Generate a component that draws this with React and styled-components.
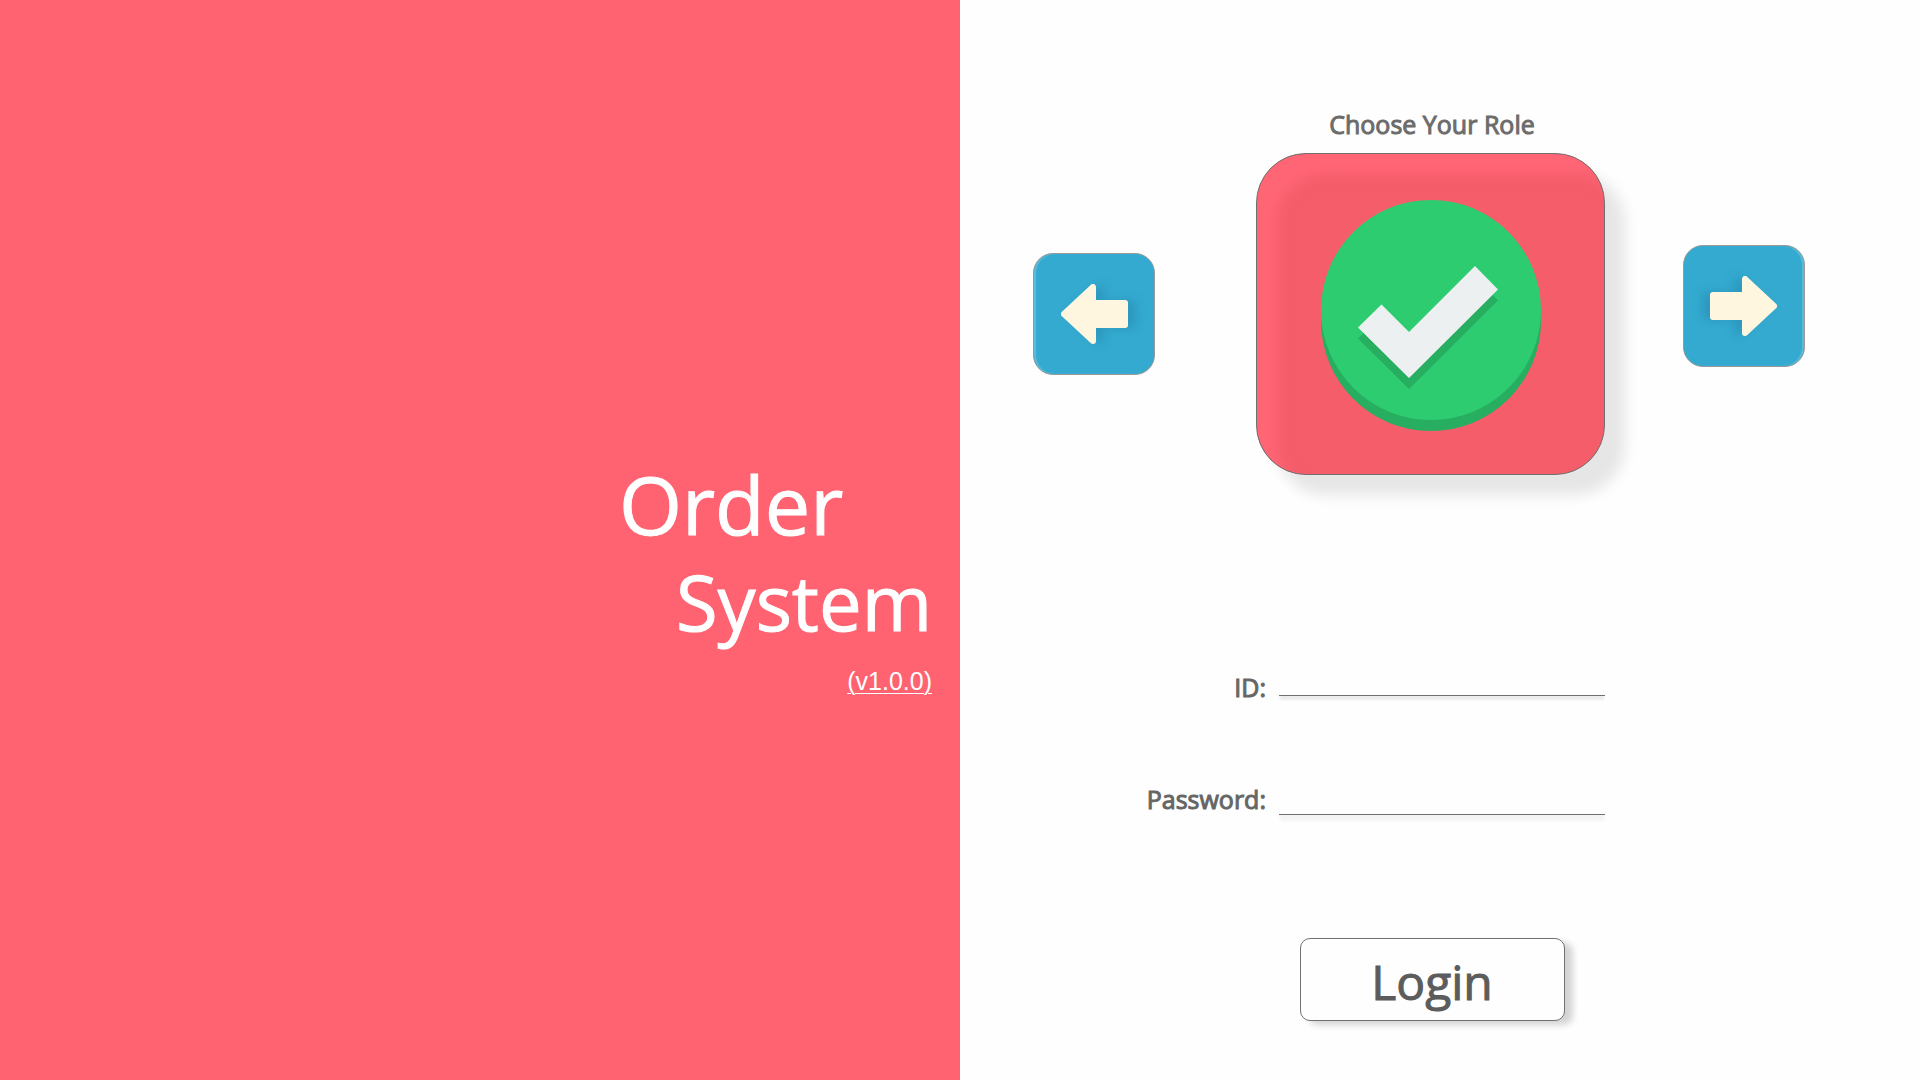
import React, { useState } from "react";
import styled, { createGlobalStyle } from "styled-components";

const GlobalStyle = createGlobalStyle`
  * { box-sizing: border-box; }
  body {
    margin: 0;
    background: #fefefe;
    color: #5c5c5c;
    font-family: "Open Sans", "Noto Sans", sans-serif;
  }
`;

const Page = styled.main`
  display: grid;
  grid-template-columns: 1fr 1fr;
  min-height: 100vh;
`;

const Brand = styled.section`
  display: flex;
  flex-direction: column;
  align-items: flex-end;
  justify-content: center;
  padding: 74px 28px 0 0;
  background: #ff6372;
  color: #fff;
`;

const Title = styled.h1`
  display: flex;
  flex-direction: column;
  width: 313px;
  margin: 0;
  font-weight: 400;
  font-size: 81px;
  line-height: 98px;
  -webkit-text-stroke: 1px currentColor;
`;

const TitleEnd = styled.span`
  align-self: flex-end;
  font-size: 76px;
`;

const Version = styled.a`
  margin-top: 12px;
  color: inherit;
  font-family: "Liberation Sans", Arial, sans-serif;
  font-size: 25px;
  line-height: 36px;
  text-decoration: underline;
  text-decoration-thickness: 1px;
  text-underline-offset: 3px;
`;

const Panel = styled.section`
  display: flex;
  flex-direction: column;
  padding-top: 106px;
`;

const Heading = styled.h2`
  margin: 0 0 11px;
  padding-right: 16px;
  font-weight: 400;
  font-size: 25px;
  line-height: 36px;
  text-align: center;
  color: #6c6c6c;
  -webkit-text-stroke: 1px currentColor;
`;

const RolePicker = styled.div`
  display: grid;
  grid-template-columns: 223fr 349px 200fr;
  align-items: center;
  padding: 0 115px 0 73px;
`;

const ArrowButton = styled.button`
  width: 122px;
  height: 122px;
  padding: 0;
  border: 1px solid #999;
  border-radius: 20px;
  background: #34aad0;
  box-shadow: inset ${(p) => (p.$next ? "-2px" : "2px")} 0 1px #5cbbd9;
  cursor: pointer;
`;

const NextSlot = styled.div`
  justify-self: end;
  padding-bottom: 12px;
`;

const ArrowDrawing = styled.svg`
  display: block;
  width: 120px;
  height: 120px;
  transform: ${(p) => (p.$next ? "scaleX(-1)" : "none")};
  filter: drop-shadow(8px 0 5px rgba(20, 100, 140, 0.25));
`;

const RoleCard = styled.div`
  display: flex;
  align-items: center;
  justify-content: center;
  height: 322px;
  padding-top: 2px;
  border: 1px solid #707070;
  border-radius: 50px;
  background: #f55d6b;
  box-shadow:
    inset 20px 20px 14px #ff6675,
    20px 20px 14px #e6e6e6;
`;

const Form = styled.form`
  display: flex;
  flex-direction: column;
`;

const Field = styled.div`
  display: flex;
  align-items: flex-end;
  justify-content: flex-end;
  gap: 13px;
  padding-right: 315px;
  margin-top: ${(p) => p.$space};
`;

const Label = styled.label`
  font-weight: 400;
  font-size: 25px;
  line-height: 32px;
  text-align: right;
  color: #666;
  -webkit-text-stroke: 1px currentColor;
`;

const Input = styled.input`
  width: 326px;
  height: 40px;
  margin: 0 0 ${(p) => p.$raise || "0"};
  padding: 0 4px;
  border: 0;
  border-bottom: 1px solid #707070;
  border-radius: 0;
  outline: none;
  background: transparent;
  box-shadow: ${(p) => p.$shadow};
  color: inherit;
  font: inherit;
  font-size: 24px;
`;

const LoginRow = styled.div`
  display: flex;
  justify-content: center;
  padding: 123px 16px 0 0;
`;

const LoginButton = styled.button`
  width: 265px;
  height: 83px;
  padding: 4px 0 0;
  border: 1px solid #707070;
  border-radius: 10px;
  background: #fefefe;
  box-shadow: 8px 4px 6px #d4d4d4;
  color: #5c5c5c;
  font-family: inherit;
  font-size: 48px;
  line-height: 60px;
  -webkit-text-stroke: 1px currentColor;
  cursor: pointer;
`;

function Arrow({ next }) {
  return (
    <ArrowDrawing $next={next} viewBox="1 1 120 120" aria-hidden="true">
      <path
        d="M31 61 60 34V50H92V72H60V88Z"
        fill="#fff6e0"
        stroke="#fff6e0"
        strokeWidth="6"
        strokeLinejoin="round"
      />
    </ArrowDrawing>
  );
}

function CheckBadge() {
  const tick = "M37 127.500 60.500 104.500 88 132 154 66 177 89.500 88 178Z";
  return (
    <svg width="220" height="231" viewBox="0 0 220 231" role="img" aria-label="Selected">
      <circle cx="110" cy="121" r="110" fill="#27ae60" />
      <circle cx="110" cy="110" r="110" fill="#2ecc71" />
      <path d={tick} transform="translate(0 11)" fill="#27ae60" />
      <path d={tick} fill="#ecf0f1" />
    </svg>
  );
}

export default function App() {
  const [id, setId] = useState("");
  const [password, setPassword] = useState("");

  return (
    <>
      <GlobalStyle />
      <Page>
        <Brand>
          <Title>
            <span>Order</span>
            <TitleEnd>System</TitleEnd>
          </Title>
          <Version href="#version">(v1.0.0)</Version>
        </Brand>
        <Panel>
          <Heading>Choose Your Role</Heading>
          <RolePicker>
            <ArrowButton type="button" aria-label="Previous role">
              <Arrow />
            </ArrowButton>
            <RoleCard>
              <CheckBadge />
            </RoleCard>
            <NextSlot>
              <ArrowButton $next type="button" aria-label="Next role">
                <Arrow next />
              </ArrowButton>
            </NextSlot>
          </RolePicker>
          <Form onSubmit={(e) => e.preventDefault()}>
            <Field $space="181px">
              <Label htmlFor="user-id">ID:</Label>
              <Input
                id="user-id"
                $raise="7px"
                $shadow="0 5px 2px -1px #ececec"
                value={id}
                onChange={(e) => setId(e.target.value)}
              />
            </Field>
            <Field $space="72px">
              <Label htmlFor="user-password">Password:</Label>
              <Input
                id="user-password"
                type="password"
                $shadow="0 7px 3px -1px #f4f4f4"
                value={password}
                onChange={(e) => setPassword(e.target.value)}
              />
            </Field>
            <LoginRow>
              <LoginButton type="submit">Login</LoginButton>
            </LoginRow>
          </Form>
        </Panel>
      </Page>
    </>
  );
}
